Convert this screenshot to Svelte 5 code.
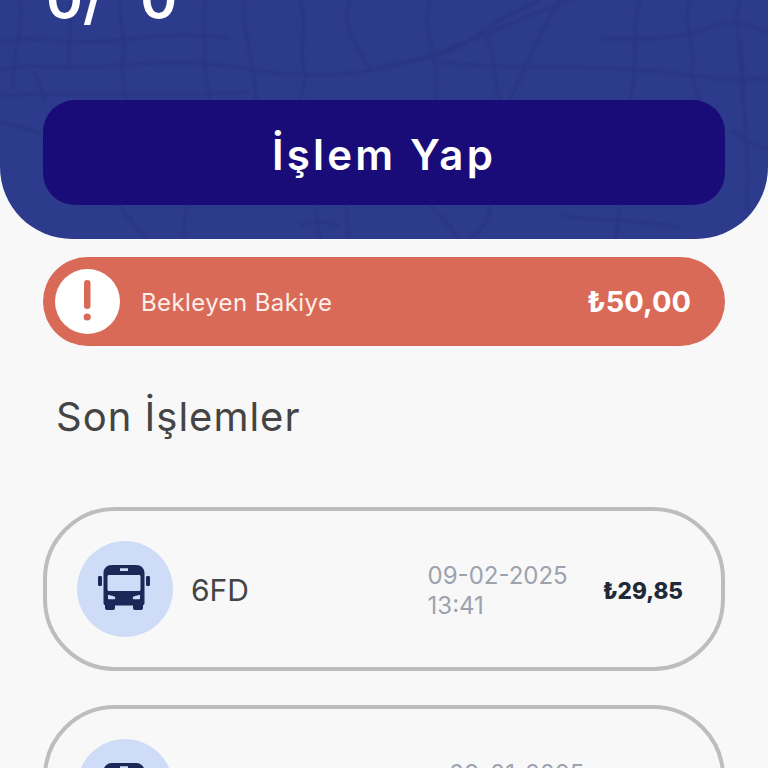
<script lang="ts">
  const roads = [
    "M0 70 C40 62 60 70 110 66 S190 60 240 68 S330 78 372 70 S450 50 520 20 S590 -4 610 -10",
    "M372 70 C400 60 440 62 470 40 S520 10 540 0",
    "M20 0 C24 30 10 60 14 90",
    "M70 66 C66 40 74 20 70 0",
    "M30 70 C40 76 40 90 46 100",
    "M120 0 C118 24 128 44 122 66 L126 100",
    "M206 0 C200 24 208 46 204 62 L210 100",
    "M245 0 C240 30 256 60 256 100",
    "M300 0 C310 24 296 50 306 76 L300 100",
    "M350 0 C340 24 356 48 372 70",
    "M430 0 C420 30 440 50 436 100",
    "M480 30 C500 50 490 70 500 100",
    "M560 0 C540 30 530 60 510 100",
    "M600 40 C630 36 660 44 700 30 S750 26 768 32",
    "M640 0 C630 30 640 60 630 100",
    "M690 0 C680 24 700 50 690 74 L700 100",
    "M740 0 C730 30 748 60 742 100",
    "M0 42 C40 34 70 46 120 40 S190 34 230 38",
    "M440 62 C500 70 560 64 640 70 S720 84 768 78",
    "M0 96 C60 90 160 98 250 92",
    "M116 200 C125 215 140 230 146 239",
    "M188 205 C182 220 186 230 182 239",
    "M315 205 L320 239",
    "M300 225 C310 222 320 220 340 226",
    "M430 205 C445 220 452 230 460 239",
    "M490 205 C490 225 478 232 470 239",
    "M345 205 C350 215 345 230 350 239",
    "M0 205 C10 212 16 225 14 239",
    "M730 130 C745 140 760 150 768 148",
    "M740 40 C738 70 752 150 746 210",
    "M0 120 C12 130 28 124 40 134",
    "M560 215 C590 222 640 218 680 228",
    "M620 205 L616 239",
  ];

  const transactions = [
    { line: "6FD", date: "09-02-2025", time: "13:41", amount: "₺29,85" },
    { line: "", date: "09-01-2025", time: "18:12", amount: "₺7,00" },
  ];
</script>

<div class="screen">
  <header class="hero">
    <svg class="hero__map" viewBox="0 0 768 239" width="768" height="239" aria-hidden="true">
      {#each roads as d}
        <path {d} />
      {/each}
    </svg>
    <div class="hero__count">0/ 0</div>
    <button class="hero__action">İşlem Yap</button>
  </header>

  <div class="pending">
    <span class="pending__badge">
      <svg viewBox="0 0 65 65" width="65" height="65" aria-hidden="true">
        <rect x="29" y="11" width="6.5" height="29" rx="3.2" fill="#d96a58" />
        <circle cx="32.200" cy="48" r="3.600" fill="#d96a58" />
      </svg>
    </span>
    <span class="pending__label">Bekleyen Bakiye</span>
    <span class="pending__amount">₺50,00</span>
  </div>

  <h2 class="section-title">Son İşlemler</h2>

  <div class="list">
    {#each transactions as tx}
      <div class="tx">
        <span class="tx__icon">
          <svg viewBox="0 0 52 45" width="52" height="45" aria-hidden="true">
            <rect x="0" y="11" width="4" height="10" rx="1.200" fill="#1a2757" />
            <rect x="48" y="11" width="4" height="10" rx="1.200" fill="#1a2757" />
            <rect x="7" y="36" width="10" height="9" rx="2" fill="#1a2757" />
            <rect x="35" y="36" width="10" height="9" rx="2" fill="#1a2757" />
            <path fill="#1a2757" fill-rule="evenodd" d="M14 0H38C43 0 46.500 3.500 46.500 8V38C46.500 39.500 45.500 40.500 44 40.500H8C6.500 40.500 5.500 39.500 5.500 38V8C5.500 3.500 9 0 14 0ZM22 3.200V6H30V3.200ZM11 10C10 10 9.500 10.600 9.500 11.500V24.500C9.500 25.400 10 26 11 26H41C42 26 42.500 25.400 42.500 24.500V11.500C42.500 10.600 42 10 41 10ZM10 30.500V33.500C10 34 10.500 34.200 11 34.200H16.500C17.500 34.200 17.500 32 16.500 31.500L11 30C10.500 29.900 10 30 10 30.500ZM42 30.500C42 30 41.500 29.900 41 30L35.500 31.500C34.500 32 34.500 34.200 35.500 34.200H41C41.500 34.200 42 34 42 33.500Z" />
          </svg>
        </span>
        <span class="tx__line">{tx.line}</span>
        <span class="tx__when">{tx.date}<br />{tx.time}</span>
        <span class="tx__amount">{tx.amount}</span>
      </div>
    {/each}
  </div>
</div>

<style>
  :global(body) {
    background: #f8f8f8;
    overflow: hidden;
  }

  .screen {
    width: 768px;
    height: 768px;
    overflow: hidden;
    background: #f8f8f8;
    font-family: Inter, "Noto Sans", sans-serif;
  }

  .hero {
    position: relative;
    box-sizing: border-box;
    height: 239px;
    padding: 0 43px;
    background: #2c3b8c;
    border-radius: 0 0 72px 72px;
    overflow: hidden;
  }

  .hero__map {
    position: absolute;
    inset: 0;
    filter: blur(0.8px);
  }

  .hero__map path {
    fill: none;
    stroke: #293682;
    stroke-width: 3;
  }

  .hero__count {
    position: relative;
    height: 100px;
    margin-top: -33px;
    padding-left: 3px;
    font-size: 56px;
    font-weight: 600;
    line-height: 64px;
    color: #fff;
    word-spacing: 22px;
  }

  .hero__action {
    position: relative;
    display: block;
    width: 682px;
    height: 105px;
    margin-top: 33px;
    padding: 3px 0 0;
    border: 0;
    border-radius: 32px;
    background: #1a0c78;
    color: #fff;
    font-family: inherit;
    font-size: 42px;
    font-weight: 600;
    letter-spacing: 3.2px;
  }

  .pending {
    display: flex;
    align-items: center;
    height: 89px;
    margin: 18px 43px 0;
    padding: 0 34px 0 12px;
    border-radius: 45px;
    background: #d96a58;
  }

  .pending__badge {
    display: flex;
    width: 65px;
    height: 65px;
    border-radius: 50%;
    background: #fff;
  }

  .pending__label {
    margin: 2px 0 0 21px;
    font-size: 24px;
    letter-spacing: 0.4px;
    color: #fdeee9;
  }

  .pending__amount {
    margin-left: auto;
    font-size: 29px;
    font-weight: 700;
    color: #fff;
  }

  .section-title {
    margin: 40px 0 0 56px;
    font-size: 40px;
    line-height: 62px;
    font-weight: 400;
    letter-spacing: 1px;
    color: #444;
  }

  .list {
    display: flex;
    flex-direction: column;
    gap: 34px;
    margin: 59px 43px 0;
  }

  .tx {
    display: flex;
    align-items: center;
    box-sizing: border-box;
    flex: none;
    height: 164px;
    padding: 0 38px 0 30px;
    border: 4px solid #bdbdbd;
    border-radius: 72px;
  }

  .tx__icon {
    display: flex;
    align-items: center;
    justify-content: center;
    width: 96px;
    height: 96px;
    padding: 0 2px 3px 0;
    box-sizing: border-box;
    border-radius: 50%;
    background: #cfdcf8;
  }

  .tx__line {
    margin: 2px 0 0 18px;
    font-size: 30px;
    color: #444;
  }

  .tx__when {
    margin: 3px 0 0 auto;
    font-size: 24px;
    line-height: 30px;
    color: #9ca3af;
  }

  .tx__amount {
    margin: 2px 0 0 35px;
    font-size: 22.5px;
    font-weight: 800;
    color: #1f2937;
  }
</style>
